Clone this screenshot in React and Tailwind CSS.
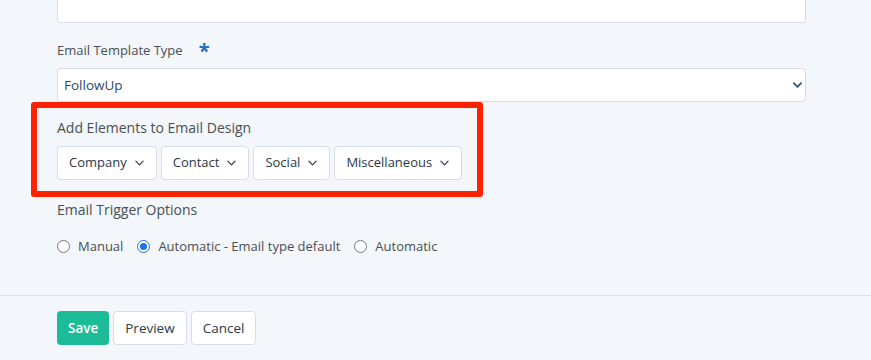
import React from "react";

const Chevron = ({ className = "", bold = false }) => (
  <svg viewBox="0 0 10 6" width="9" height="6" className={className} fill="none">
    <path
      d="M1 1l4 4 4-4"
      stroke="currentColor"
      strokeWidth={bold ? "2" : "1.3"}
      strokeLinecap="round"
      strokeLinejoin="round"
    />
  </svg>
);

const Radio = ({ checked, label }) => (
  <label className="flex items-center gap-[8px]">
    <span
      className={
        "flex h-[13px] w-[13px] items-center justify-center rounded-full border bg-white " +
        (checked ? "border-[#1a73e8]" : "border-[#777]")
      }
    >
      {checked && <span className="h-[7px] w-[7px] rounded-full bg-[#1a73e8]" />}
    </span>
    <span>{label}</span>
  </label>
);

const App = () => {
  const elements = ["Company", "Contact", "Social", "Miscellaneous"];

  return (
    <div className="h-[360px] w-[871px] overflow-hidden bg-[#f3f6fa] font-['Open_Sans',sans-serif] text-[#4a4f55]">
      <div className="pl-[57px] pr-[65px]">
        <div className="h-[23px] rounded-b border border-t-0 border-[#d8dee6] bg-white" />

        <div className="mt-[18px] flex h-[20px] items-center text-[13px]">
          Email Template Type
          <span className="ml-[16px] text-[20px] font-bold leading-none text-[#1f6fc4]">*</span>
        </div>

        <div className="mt-[7px] flex h-[34px] items-center justify-between rounded border border-[#d8dee6] bg-white pl-[6px] pr-[3px] text-[13.5px] text-[#2c4a6b]">
          <span>FollowUp</span>
          <Chevron bold className="text-[#2c5a85]" />
        </div>
      </div>

      <div className="ml-[31px] h-[95px] w-[452px] rounded-[3px] border-[6px] border-[#ff2200] pl-[20px] pt-[10px]">
        <div className="text-[14px] leading-[20px]">Add Elements to Email Design</div>
        <div className="mt-[8px] flex gap-[4px]">
          {elements.map((e) => (
            <button
              key={e}
              className="flex h-[34px] items-center gap-[8px] rounded border border-[#d8dee6] bg-white pl-[11px] pr-[12px] text-[13px] text-[#2d3748]"
            >
              {e}
              <Chevron className="text-[#2d3748]" />
            </button>
          ))}
        </div>
      </div>

      <div className="pl-[57px]">
        <div className="mt-[3px] text-[14px] leading-[20px]">Email Trigger Options</div>
        <div className="mt-[16px] flex gap-[14px] text-[13px] leading-[20px]">
          <Radio label="Manual" />
          <Radio checked label="Automatic - Email type default" />
          <Radio label="Automatic" />
        </div>
      </div>

      <div className="mt-[39px] border-t border-[#dde3ea]" />

      <div className="flex gap-[4px] pl-[57px] pt-[15px] text-[13.5px]">
        <button className="h-[34px] rounded bg-[#1dbc98] px-[11px] font-semibold text-white">Save</button>
        <button className="h-[34px] rounded border border-[#d8dee6] bg-white px-[11px] text-[#2d3748]">Preview</button>
        <button className="h-[34px] rounded border border-[#d8dee6] bg-white px-[11px] text-[#2d3748]">Cancel</button>
      </div>
    </div>
  );
};

export default App;
